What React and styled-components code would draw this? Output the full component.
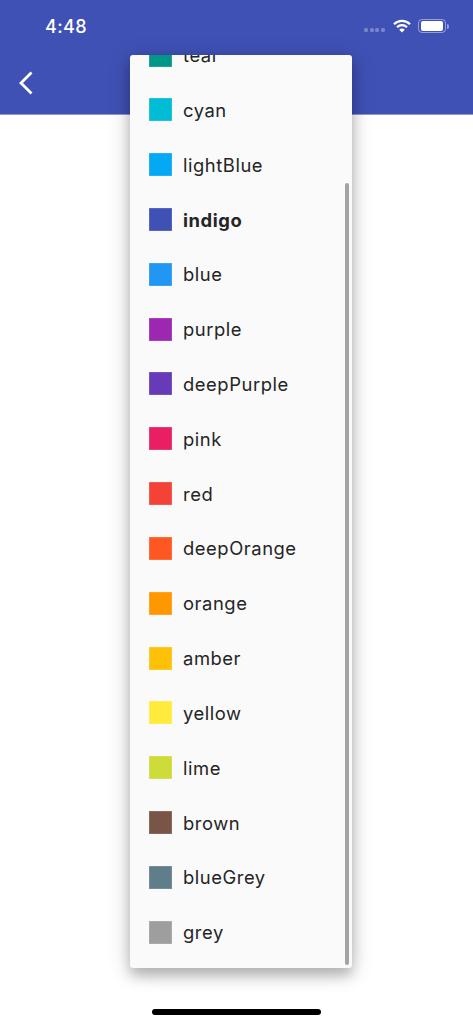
import React from 'react';
import styled, { createGlobalStyle } from 'styled-components';

const GlobalStyle = createGlobalStyle`
  html, body {
    margin: 0;
    padding: 0;
    background: #fff;
    font-family: "Inter", "Liberation Sans", sans-serif;
  }
`;

const Page = styled.div`
  position: relative;
  width: 473px;
  height: 1024px;
  overflow: hidden;
  background: #fff;
`;

const Header = styled.header`
  height: 114px;
  background: #3f51b5;
  border-bottom: 1px solid #8f9ad6;
  display: flex;
  flex-direction: column;
`;

const StatusBar = styled.div`
  height: 52px;
  padding: 0 27px 0 45px;
  display: flex;
  align-items: center;
  justify-content: space-between;
  color: #fff;
`;

const Time = styled.span`
  font-size: 18px;
  font-weight: 500;
  letter-spacing: 0.4px;
`;

const StatusIcons = styled.div`
  display: flex;
  align-items: center;
  gap: 7px;
`;

const SignalDots = styled.div`
  display: flex;
  gap: 1.6px;
  margin-top: 8px;
  margin-right: 1px;
`;

const Dot = styled.span`
  width: 4px;
  height: 4px;
  border-radius: 1.5px;
  background: rgba(255, 255, 255, 0.3);
`;

const Battery = styled.div`
  position: relative;
  box-sizing: border-box;
  width: 28px;
  height: 14px;
  padding: 1px 2px;
  border: 1px solid rgba(255, 255, 255, 0.45);
  border-radius: 4px;

  &::before {
    content: '';
    display: block;
    width: 100%;
    height: 100%;
    background: #fff;
    border-radius: 2px;
  }

  &::after {
    content: '';
    position: absolute;
    right: -3.5px;
    top: 3.5px;
    width: 1.5px;
    height: 5px;
    background: rgba(255, 255, 255, 0.45);
    border-radius: 0 2px 2px 0;
  }
`;

const NavBar = styled.div`
  flex: 1;
  padding-left: 17px;
  display: flex;
  align-items: center;
`;

const Menu = styled.div`
  position: absolute;
  left: 130px;
  top: 55px;
  width: 222px;
  height: 913px;
  overflow: hidden;
  background: #fafafa;
  border-radius: 3px;
  box-shadow: 0 8px 12px rgba(0, 0, 0, 0.18), 0 4px 22px rgba(0, 0, 0, 0.22);
`;

const List = styled.ul`
  list-style: none;
  margin: -27.4px 0 0;
  padding: 0;
`;

const Item = styled.li`
  height: 54.83px;
  padding-left: 19px;
  display: flex;
  align-items: center;
  gap: 11px;
  font-size: 18.4px;
  letter-spacing: 0.55px;
  font-weight: ${(p) => (p.$selected ? 700 : 400)};
  color: #252525;
`;

const Swatch = styled.span`
  width: 23px;
  height: 23px;
  background: ${(p) => p.$color};
  box-shadow: inset 0 0 0 0.5px rgba(255, 255, 255, 0.25);
`;

const Scrollbar = styled.div`
  position: absolute;
  top: 128px;
  right: 3px;
  width: 4px;
  height: 782px;
  border-radius: 2px;
  background: #a3a3a3;
`;

const HomeIndicator = styled.div`
  position: absolute;
  left: 152px;
  bottom: 9px;
  width: 169px;
  height: 6px;
  border-radius: 3px;
  background: #000;
`;

const colors = [
  ['teal', '#009688'],
  ['cyan', '#00bcd4'],
  ['lightBlue', '#03a9f4'],
  ['indigo', '#3f51b5'],
  ['blue', '#2196f3'],
  ['purple', '#9c27b0'],
  ['deepPurple', '#673ab7'],
  ['pink', '#e91e63'],
  ['red', '#f44336'],
  ['deepOrange', '#ff5722'],
  ['orange', '#ff9800'],
  ['amber', '#ffc107'],
  ['yellow', '#ffeb3b'],
  ['lime', '#cddc39'],
  ['brown', '#795548'],
  ['blueGrey', '#607d8b'],
  ['grey', '#9e9e9e'],
];

const App = () => {
  return (
    <Page>
      <GlobalStyle />
      <Header>
        <StatusBar>
          <Time>4:48</Time>
          <StatusIcons>
            <SignalDots>
              <Dot />
              <Dot />
              <Dot />
              <Dot />
            </SignalDots>
            <svg width="18" height="14" viewBox="0 0 18 14" fill="none">
              <path d="M1 5.2 A11.5 11.5 0 0 1 17 5.2" stroke="#fff" strokeWidth="2.2" />
              <path d="M4 8.2 A7.2 7.2 0 0 1 14 8.2" stroke="#fff" strokeWidth="2.2" />
              <path d="M9 13.6 L6.2 10.8 A4 4 0 0 1 11.8 10.8 Z" fill="#fff" />
            </svg>
            <Battery />
          </StatusIcons>
        </StatusBar>
        <NavBar>
          <svg width="18" height="26" viewBox="0 0 18 26" fill="none">
            <path d="M14.5 2.5 L4 13 L14.5 23.5" stroke="#fff" strokeWidth="2.8" />
          </svg>
        </NavBar>
      </Header>
      <Menu>
        <List>
          {colors.map(([name, color]) => (
            <Item key={name} $selected={name === 'indigo'}>
              <Swatch $color={color} />
              {name}
            </Item>
          ))}
        </List>
        <Scrollbar />
      </Menu>
      <HomeIndicator />
    </Page>
  );
};

export default App;
